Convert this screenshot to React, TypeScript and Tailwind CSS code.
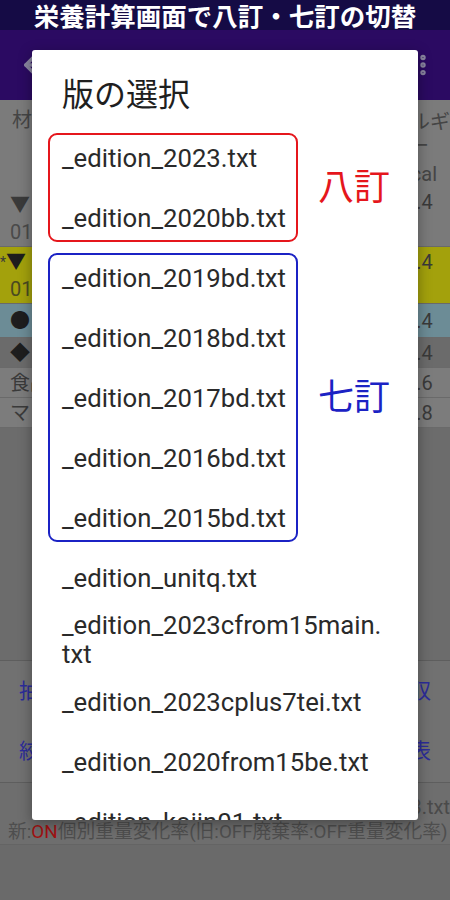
import { ArrowLeft, EllipsisVertical } from 'lucide-react';

const FONT = "font-[family-name:Roboto,'Noto_Sans_CJK_JP',sans-serif]";

type GroupProps = {
  files: string[];
  label: string;
  boxClass: string;
  labelClass: string;
};

function FileItem({ name }: { name: string }) {
  return (
    <div className="h-[60px] flex items-center pl-[30px] text-[25.7px] text-[#2a2a2a] whitespace-nowrap">
      {name}
    </div>
  );
}

function EditionGroup({ files, label, boxClass, labelClass }: GroupProps) {
  return (
    <div className="relative flex items-center">
      <div className="w-[266px]">
        {files.map((f) => (
          <FileItem key={f} name={f} />
        ))}
      </div>
      <span className={`ml-[20px] text-[36px] leading-[40px] ${labelClass}`}>{label}</span>
      {/* annotation frame drawn over the items */}
      <div className={`absolute left-[16px] top-[5px] bottom-[6px] w-[250px] border-2 rounded-[9px] ${boxClass}`} />
    </div>
  );
}

function TableRow({
  left,
  right,
  className,
}: {
  left: React.ReactNode;
  right: React.ReactNode;
  className: string;
}) {
  return (
    <div className={`flex justify-between border-b border-[#6a6a6a] ${className}`}>
      <div className="pl-[10px] text-[20px] text-[#3a3a3a]">{left}</div>
      <div className="w-[62px] text-center text-[20px] text-[#3a3a3a]">{right}</div>
    </div>
  );
}

export default function App() {
  return (
    <div className={`relative w-[450px] h-[900px] overflow-hidden bg-[#6a6a6a] ${FONT}`}>
      {/* caption */}
      <div className="h-[30px] pt-[4px] bg-[#150b45] text-white font-bold text-[25.5px] leading-[26px] text-center whitespace-nowrap">
        栄養計算画面で八訂・七訂の切替
      </div>

      {/* app bar (dimmed) */}
      <div className="h-[70px] bg-[#2b0a62] flex items-center justify-between pl-[20px] pr-[14px]">
        <ArrowLeft className="w-[28px] h-[28px] text-[#8a86a0]" strokeWidth={3} />
        <EllipsisVertical className="w-[26px] h-[26px] text-[#8a86a0]" strokeWidth={3} />
      </div>

      {/* table behind the dialog */}
      <div className="bg-[#7b7b7b]">
        <div className="h-[90px] flex justify-between">
          <div className="pl-[12px] pt-[8px] text-[20px] leading-[24px] text-[#454545]">材料名</div>
          <div className="w-[62px] pt-[10px] text-[20px] leading-[24px] text-[#454545]">
            <div className="flex justify-end">
              <span className="whitespace-nowrap">エネルギ</span>
            </div>
            <div className="text-center">ー</div>
            <div className="text-center mt-[4px]">kcal</div>
          </div>
        </div>
        <TableRow
          className="h-[57px] bg-[#7a7a7a] leading-[27px] pt-[2px]"
          left={
            <>
              <div>▼</div>
              <div className="text-[#4a4a4a]">01</div>
            </>
          }
          right={<div className="leading-[20px]">3.4</div>}
        />
        <TableRow
          className="h-[57px] bg-[#a3a10c] leading-[27px] pt-[2px]"
          left={
            <>
              <div className="-ml-[10px]">
                <span className="text-[14px] align-top">*</span>
                <span className="text-[#1d1d1d]">▼</span>
              </div>
              <div className="text-[#4a4a20]">01</div>
            </>
          }
          right={<div>3.4</div>}
        />
        <TableRow
          className="h-[34px] items-center bg-[#6c8c96]"
          left={<span className="text-[#1e1e1e]">●</span>}
          right={<span>3.4</span>}
        />
        <TableRow
          className="h-[30px] items-center bg-[#6b6b6b]"
          left={<span className="text-[#1e1e1e]">◆</span>}
          right={<span>3.4</span>}
        />
        <TableRow
          className="h-[30px] items-center bg-[#7c7c7c]"
          left={<span>食品</span>}
          right={<span>7.6</span>}
        />
        <TableRow
          className="h-[30px] items-center bg-[#7c7c7c]"
          left={<span>マ</span>}
          right={<span>5.8</span>}
        />
      </div>

      <div className="h-[233px] bg-[#6c6c6c] border-b border-[#5e5e5e]" />

      {/* buttons */}
      <div className="h-[122px] bg-[#717171] border-b border-[#5e5e5e] flex flex-col justify-around px-[19px] text-[21px] text-[#2c2c9a]">
        <div className="flex justify-between">
          <span>抽出</span>
          <span>回収</span>
        </div>
        <div className="flex justify-between">
          <span>絞込</span>
          <span>成分表</span>
        </div>
      </div>

      {/* status */}
      <div className="h-[62px] bg-[#6e6e6e] border-b border-[#646464] pt-[11px]">
        <div className="text-right text-[20px] leading-[26px] text-[#4a4a4a] whitespace-nowrap">
          使用中:_edition_2023.txt
        </div>
        <div className="pl-[8px] text-[18.8px] leading-[24px] text-[#4e4e4e] whitespace-nowrap">
          新:<span className="text-[#a01212]">ON</span>個別重量変化率(旧:OFF廃棄率:OFF重量変化率)
        </div>
      </div>

      {/* dialog */}
      <div className="absolute left-[32px] top-[50px] w-[386px] h-[770px] bg-white rounded-[3px] overflow-hidden shadow-[0_4px_14px_rgba(0,0,0,0.35)]">
        <div className="pl-[30px] pt-[26px] pb-[14px] text-[32px] leading-[38px] text-[#1f1f1f]">版の選択</div>
        <EditionGroup
          files={['_edition_2023.txt', '_edition_2020bb.txt']}
          label="八訂"
          boxClass="border-[#e5161c]"
          labelClass="text-[#e5161c]"
        />
        <EditionGroup
          files={[
            '_edition_2019bd.txt',
            '_edition_2018bd.txt',
            '_edition_2017bd.txt',
            '_edition_2016bd.txt',
            '_edition_2015bd.txt',
          ]}
          label="七訂"
          boxClass="border-[#1b22c4]"
          labelClass="text-[#1b22c4]"
        />
        <FileItem name="_edition_unitq.txt" />
        <div className="min-h-[60px] py-[3px] pl-[30px] text-[25.7px] leading-[29px] text-[#2a2a2a]">
          _edition_2023cfrom15main.
          <br />
          txt
        </div>
        <FileItem name="_edition_2023cplus7tei.txt" />
        <FileItem name="_edition_2020from15be.txt" />
        <FileItem name="_edition_kojin01.txt" />
      </div>
    </div>
  );
}
